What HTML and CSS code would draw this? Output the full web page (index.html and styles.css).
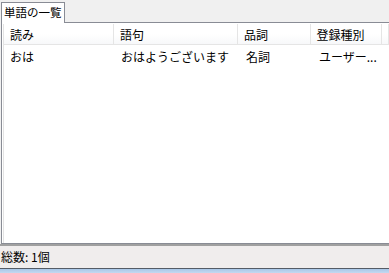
FILE: index.html
```html
<!DOCTYPE html>
<html lang="ja">
<head>
  <meta charset="UTF-8" />
  <title>単語の一覧</title>
  <link rel="stylesheet" href="styles.css">
</head>
<body>
  <div class="window">
    <div class="tabs">
      <div class="tab">単語の一覧</div>
    </div>
    <div class="panel">
      <div class="list">
        <div class="row head">
          <div class="cell c1">読み</div>
          <div class="cell c2">語句</div>
          <div class="cell c3">品詞</div>
          <div class="cell c4">登録種別</div>
          <div class="cell c5"></div>
        </div>
        <div class="row">
          <div class="cell c1">おは</div>
          <div class="cell c2">おはようございます</div>
          <div class="cell c3">名詞</div>
          <div class="cell c4">ユーザー...</div>
        </div>
      </div>
    </div>
    <div class="status">総数: 1個</div>
    <div class="frame"></div>
  </div>
</body>
</html>
```

FILE: styles.css
```css
body {
  margin: 0;
  font-family: "Noto Sans CJK JP", "Liberation Sans", sans-serif;
  font-size: 12px;
  color: #000;
  background: #f0f0f0;
}
.window {
  width: 389px;
  height: 273px;
  display: flex;
  flex-direction: column;
  overflow: hidden;
}
.tabs {
  height: 22px;
  padding: 2px 0 0 1px;
  box-sizing: border-box;
  display: flex;
  flex: none;
}
.tab {
  width: 64px;
  height: 21px;
  box-sizing: border-box;
  background: #fff;
  border: 1px solid #898c95;
  border-bottom: none;
  padding-left: 2px;
  font-size: 11.5px;
  line-height: 19px;
  white-space: nowrap;
  margin-bottom: -1px;
  position: relative;
  z-index: 1;
}
.panel {
  height: 222px;
  flex: none;
  box-sizing: border-box;
  margin-left: 1px;
  border: 1px solid #898c95;
  border-right: none;
  background: #fff;
  padding: 1px 0 0 1px;
}
.list {
  height: 100%;
  box-sizing: border-box;
  border-left: 1px solid #e3e3e3;
}
.row {
  display: flex;
  height: 17px;
  line-height: 18px;
  margin-top: 3px;
}
.row.head {
  height: 20px;
  line-height: 21px;
  margin-top: 0;
  border-bottom: 1px solid #e5e5e5;
  background: linear-gradient(#ffffff, #ffffff 50%, #f7f8fa);
}
.cell {
  box-sizing: border-box;
  padding-left: 6px;
  white-space: nowrap;
  overflow: hidden;
}
.head .cell {
  border-right: 1px solid #e5e5e5;
}
.c1 { width: 111px; }
.c2 { width: 125px; }
.c3 { width: 73px; }
.c4 { width: 72px; }
.c5 { flex: 1; border-right: none; }
.status {
  height: 22px;
  flex: none;
  line-height: 21px;
  border-top: 2px solid #a0a0a0;
  background: #f0eded;
  padding-left: 1px;
}
.frame {
  flex: 1;
  border-top: 1px solid #555c66;
  background: linear-gradient(#a9c7e8, #c3d9f0);
}
```
